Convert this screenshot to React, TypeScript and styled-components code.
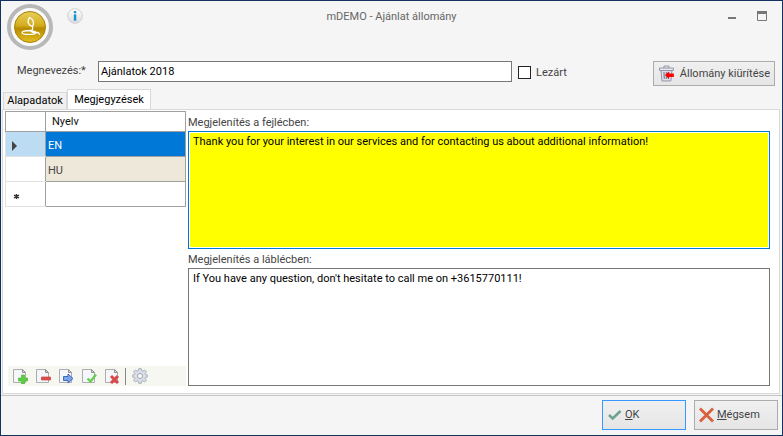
import React, { useState } from "react";
import styled, { createGlobalStyle } from "styled-components";

const GlobalStyle = createGlobalStyle`
  *, *::before, *::after { box-sizing: border-box; }
  body {
    margin: 0;
    background: #f5f5f5;
    color: #444;
    font-family: Roboto, "DejaVu Sans Condensed", sans-serif;
    font-size: 11px;
    line-height: 14px;
  }
  button, input, textarea { font: inherit; color: inherit; }
`;

const Window = styled.main`
  display: flex;
  flex-direction: column;
  min-height: 100vh;
  border: 1px solid #14325f;
`;

const TitleBar = styled.header`
  display: grid;
  grid-template-columns: 1fr auto 1fr;
  padding: 3px 6px 0;
  height: 56px;
`;

const TitleLeft = styled.div`
  display: flex;
  align-items: flex-start;
  gap: 14px;
`;

const Title = styled.h1`
  margin: 5px 0 0;
  font-size: 11px;
  line-height: 16px;
  font-weight: normal;
  color: #666;
`;

const TitleActions = styled.div`
  display: flex;
  justify-content: flex-end;
  align-items: flex-start;
  gap: 19px;
  padding: 7px 8px 0 0;
`;

const IconButton = styled.button`
  display: flex;
  padding: 0;
  border: 0;
  background: none;
`;

const InfoButton = styled(IconButton)`
  margin-top: 4px;
`;

const FieldRow = styled.div`
  display: flex;
  align-items: flex-start;
  padding: 4px 7px 0 16px;
  height: 32px;
`;

const FieldLabel = styled.label`
  flex: none;
  width: 81px;
  padding-top: 3px;
`;

const NameInput = styled.input`
  flex: 0 1 414px;
  min-width: 80px;
  height: 21px;
  padding: 0 2px;
  border: 1px solid #777;
  border-radius: 0;
  background: #fff;
  color: #000;
`;

const CheckLabel = styled.label`
  display: flex;
  align-items: center;
  gap: 5px;
  margin: 4px auto 0 6px;
  height: 15px;
`;

const Checkbox = styled.input`
  appearance: none;
  width: 13px;
  height: 13px;
  margin: 0;
  border: 1px solid #222;
  background: #fff;
  &:checked { box-shadow: inset 0 0 0 2px #fff; background: #222; }
`;

const PushButton = styled.button<{ $primary?: boolean; $width: number; $height: number }>`
  display: flex;
  flex: none;
  align-items: center;
  gap: 3px;
  width: ${(p) => p.$width}px;
  height: ${(p) => p.$height}px;
  padding: 0 4px;
  border: 1px solid ${(p) => (p.$primary ? "#3399ff" : "#acacac")};
  background: linear-gradient(#f0f0f0, #e5e5e5);
  white-space: nowrap;
`;

const EmptyButton = styled(PushButton)`
  gap: 5px;
`;

const Tabs = styled.div`
  display: flex;
  align-items: flex-end;
  height: 20px;
  padding-left: 2px;
`;

const Tab = styled.button<{ $active: boolean }>`
  height: ${(p) => (p.$active ? 20 : 17)}px;
  width: ${(p) => (p.$active ? 84 : 64)}px;
  padding: 0;
  border: 1px solid #d9d9d9;
  border-bottom: 0;
  background: ${(p) => (p.$active ? "#fff" : "#f0f0f0")};
  color: #000;
  white-space: nowrap;
`;

const Panel = styled.section`
  display: flex;
  flex: 1;
  gap: 2px;
  margin: 0 2px 0 1px;
  padding: 1px 9px 7px 2px;
  border: 1px solid #d9d9d9;
  background: #fff;
`;

const LanguagePane = styled.div`
  display: flex;
  flex-direction: column;
  justify-content: space-between;
  width: 181px;
`;

const LanguageTable = styled.table`
  width: 100%;
  border-collapse: collapse;
  table-layout: fixed;
`;

const HeadCell = styled.th<{ $marker?: boolean }>`
  width: ${(p) => (p.$marker ? "40px" : "auto")};
  height: 20px;
  padding: 0 6px;
  border: 1px solid #a0a0a0;
  font-weight: normal;
  text-align: left;
  color: #111;
`;

const LanguageRow = styled.tr<{ $selected: boolean; $tinted: boolean }>`
  height: 25px;
  background: ${(p) => (p.$selected ? "#0078d7" : p.$tinted ? "#eee8da" : "#fff")};
  color: ${(p) => (p.$selected ? "#fff" : "#444")};
`;

const MarkerCell = styled.th<{ $selected: boolean }>`
  padding: 4px 5px 0;
  border: 1px solid #e2e2e2;
  border-right-color: #a0a0a0;
  background: ${(p) => (p.$selected ? "#bcdcf4" : "#fff")};
  text-align: left;
  svg { display: block; }
`;

const NameCell = styled.td`
  padding: 4px 2px 0;
  border: 1px solid #a0a0a0;
`;

const Toolbar = styled.div`
  display: flex;
  align-items: center;
  gap: 7px;
  height: 20px;
  margin-left: 3px;
  padding-left: 4px;
  background: #f7f7f2;
`;

const Separator = styled.span`
  width: 1px;
  height: 17px;
  margin: 0 -1px 0 -2px;
  background: #888;
`;

const Notes = styled.div`
  display: flex;
  flex: 1;
  min-width: 0;
  flex-direction: column;
  padding-top: 1px;
`;

const NoteLabel = styled.label`
  padding: 4px 0 1px;
  height: 19px;
`;

const NoteText = styled.textarea<{ $highlight?: boolean }>`
  flex: 1;
  min-height: 60px;
  margin: 0;
  padding: 3px 4px;
  border: 1px solid ${(p) => (p.$highlight ? "#0078d7" : "#777")};
  border-radius: 0;
  outline: 0;
  resize: none;
  color: #000;
  background: ${(p) => (p.$highlight ? "#ff0" : "#fff")};
  box-shadow: inset 0 0 0 1px #fff;
`;

const Footer = styled.footer`
  display: flex;
  justify-content: flex-end;
  gap: 8px;
  margin-top: 1px;
  padding: 4px 4px 5px;
  border-top: 1px solid #c4c4c4;
`;

const Logo = () => (
  <svg width="46" height="46" viewBox="0 0 46 46" aria-hidden="true">
    <defs>
      <linearGradient id="gold" x1="0" y1="0" x2="0" y2="1">
        <stop offset="0" stopColor="#e8cf5c" />
        <stop offset=".45" stopColor="#d3ad1e" />
        <stop offset=".55" stopColor="#b78c00" />
        <stop offset="1" stopColor="#e4c020" />
      </linearGradient>
    </defs>
    <circle cx="23" cy="23" r="21" fill="#fafafa" stroke="#b8b8b8" strokeWidth="4" />
    <circle cx="23" cy="23" r="15.500" fill="url(#gold)" stroke="#aa8206" />
    <g fill="none" stroke="#fff" strokeWidth="1.300" strokeLinecap="round" strokeLinejoin="round">
      <path d="M25.500 22.500C21.500 21 19.500 18 22.500 13.500c3.500 1.500 5.200 5 3 9" />
      <path d="M25.500 22.500c.5 2.500 0 4-2 4-4.500 0-8.500.5-8.500 2.200 0 2.300 14 2.300 14 0 0-1.200-2.500-1.800-5-1.500 2 2.300 4.500 1.300 6.500 1.300 1 0 1.500.8 2 1.800" />
    </g>
  </svg>
);

const InfoIcon = () => (
  <svg width="16" height="16" viewBox="0 0 16 16" aria-hidden="true">
    <defs>
      <linearGradient id="silver" x1="0" y1="0" x2="0" y2="1">
        <stop offset="0" stopColor="#fff" />
        <stop offset="1" stopColor="#dcdcdc" />
      </linearGradient>
    </defs>
    <circle cx="8" cy="8" r="7.300" fill="url(#silver)" stroke="#d0d0d0" />
    <rect x="6.800" y="3" width="2.500" height="2.200" rx=".6" fill="#1694d2" />
    <rect x="6.800" y="6.300" width="2.500" height="6.500" rx=".6" fill="#1694d2" />
  </svg>
);

const MinimizeIcon = () => (
  <svg width="10" height="10" viewBox="0 0 10 10" aria-hidden="true">
    <path d="M1 6h8v2H1z" fill="#777" />
  </svg>
);

const MaximizeIcon = () => (
  <svg width="12" height="10" viewBox="0 0 12 10" aria-hidden="true">
    <path d="M1 0h10v3H1z" fill="#777" />
    <path d="M1.500.5h9v9h-9z" fill="none" stroke="#777" />
  </svg>
);

const TrashIcon = () => (
  <svg width="17" height="17" viewBox="0 0 17 17" aria-hidden="true">
    <path d="M3 5.500h11l-1 10.500H4z" fill="#dfe2ea" stroke="#9296a5" />
    <path d="M1.500 3h14v2.500h-14z" fill="#e9ebf2" stroke="#9296a5" />
    <path d="M6 3V1h5v2" fill="none" stroke="#9296a5" />
    <path d="M6 7l.4 7M8.500 7v7M11 7l-.4 7" fill="none" stroke="#858999" strokeWidth="1.300" />
    <path d="M7 10l4-3.500v2h5v3.500h-5v2z" fill="#f00" />
  </svg>
);

type Badge = "add" | "remove" | "next" | "accept" | "cancel";

const badges: Record<Badge, React.ReactNode> = {
  add: <path d="M9.500 7h3v3h3v3h-3v3h-3v-3h-3v-3h3z" fill="#5ecb45" stroke="#4fbb3b" strokeWidth=".7" />,
  remove: <path d="M6.500 9h9v3h-9z" fill="#df4a4a" stroke="#c94545" strokeWidth=".7" />,
  next: <path d="M5.500 8.500h4.500V6l5 4.500-5 4.500v-2.500H5.500z" fill="#7aa3ea" stroke="#3f6bbd" />,
  accept: <path d="M6.500 10.500l3 3 5.500-7" fill="none" stroke="#68cc57" strokeWidth="2.400" />,
  cancel: <path d="M7 8l7 7M14 8l-7 7" fill="none" stroke="#d84848" strokeWidth="3" />,
};

const PageIcon = ({ badge }: { badge: Badge }) => (
  <svg width="16" height="16" viewBox="0 0 16 16" aria-hidden="true">
    <path d="M1.500 1.500h9l3 3v10h-12z" fill="#f5f6fc" stroke="#adadad" />
    <path d="M10.500 1.500v3h3z" fill="#ddd" stroke="#929292" />
    {badges[badge]}
  </svg>
);

const GearIcon = () => (
  <svg width="16" height="16" viewBox="0 0 16 16" aria-hidden="true">
    <path
      d="M6.700.7h2.600l.4 2 1.200.5 1.700-1.200 1.800 1.800-1.200 1.700.5 1.200 2 .4v1.800l-2 .4-.5 1.200 1.200 1.700-1.800 1.800-1.700-1.200-1.200.5-.4 2H6.700l-.4-2-1.200-.5-1.700 1.200-1.800-1.800 1.200-1.700-.5-1.200-2-.4V7.100l2-.4.5-1.200-1.200-1.700L3.400 2l1.700 1.200 1.200-.5z"
      fill="#d8dfe9"
      stroke="#a2a8b1"
      strokeWidth=".9"
    />
    <circle cx="8" cy="8" r="2.600" fill="#f8f8f4" stroke="#a2a8b1" />
  </svg>
);

const CheckIcon = () => (
  <svg width="15" height="14" viewBox="0 0 15 14" aria-hidden="true">
    <path d="M2 7l3.700 3.500L13.500 3" fill="none" stroke="#6fa18d" strokeWidth="2.500" />
  </svg>
);

const CrossIcon = () => (
  <svg width="15" height="16" viewBox="0 0 15 16" aria-hidden="true">
    <path d="M1 1.500l13 13M14 1.500l-13 13" fill="none" stroke="#d9603f" strokeWidth="2.800" />
  </svg>
);

const CurrentRowIcon = () => (
  <svg width="8" height="10" viewBox="0 0 8 10" aria-hidden="true">
    <path d="M1 0l5 5-5 5z" fill="#444" />
  </svg>
);

const NewRowIcon = () => (
  <svg width="9" height="7" viewBox="0 0 9 7" aria-hidden="true">
    <path d="M5.500 1v5M3 2.200l5 2.600M8 2.200l-5 2.600" stroke="#333" strokeWidth="1.400" />
  </svg>
);

const tools: { badge: Badge; label: string }[] = [
  { badge: "add", label: "Új" },
  { badge: "remove", label: "Törlés" },
  { badge: "next", label: "Tovább" },
  { badge: "accept", label: "Mentés" },
  { badge: "cancel", label: "Elvetés" },
];

const tabs = ["Alapadatok", "Megjegyzések"];
const languages = ["EN", "HU", ""];

export default function App() {
  const [tab, setTab] = useState("Megjegyzések");
  const [row, setRow] = useState(0);

  return (
    <Window>
      <GlobalStyle />
      <TitleBar>
        <TitleLeft>
          <Logo />
          <InfoButton aria-label="Információ">
            <InfoIcon />
          </InfoButton>
        </TitleLeft>
        <Title>mDEMO - Ajánlat állomány</Title>
        <TitleActions>
          <IconButton aria-label="Kis méret">
            <MinimizeIcon />
          </IconButton>
          <IconButton aria-label="Teljes méret">
            <MaximizeIcon />
          </IconButton>
        </TitleActions>
      </TitleBar>

      <FieldRow>
        <FieldLabel htmlFor="name">Megnevezés:*</FieldLabel>
        <NameInput id="name" defaultValue="Ajánlatok 2018" />
        <CheckLabel>
          <Checkbox type="checkbox" />
          Lezárt
        </CheckLabel>
        <EmptyButton $width={122} $height={25}>
          <TrashIcon />
          Állomány kiürítése
        </EmptyButton>
      </FieldRow>

      <Tabs role="tablist">
        {tabs.map((name) => (
          <Tab key={name} role="tab" aria-selected={tab === name} $active={tab === name} onClick={() => setTab(name)}>
            {name}
          </Tab>
        ))}
      </Tabs>

      <Panel role="tabpanel" aria-label={tab}>
        <LanguagePane>
          <LanguageTable>
            <thead>
              <tr>
                <HeadCell $marker />
                <HeadCell>Nyelv</HeadCell>
              </tr>
            </thead>
            <tbody>
              {languages.map((code, i) => (
                <LanguageRow key={i} $selected={row === i} $tinted={i % 2 === 1} onClick={() => setRow(i)}>
                  <MarkerCell $selected={row === i}>
                    {row === i ? <CurrentRowIcon /> : code === "" && <NewRowIcon />}
                  </MarkerCell>
                  <NameCell>{code}</NameCell>
                </LanguageRow>
              ))}
            </tbody>
          </LanguageTable>
          <Toolbar role="toolbar">
            {tools.map(({ badge, label }) => (
              <IconButton key={badge} aria-label={label}>
                <PageIcon badge={badge} />
              </IconButton>
            ))}
            <Separator />
            <IconButton aria-label="Beállítások">
              <GearIcon />
            </IconButton>
          </Toolbar>
        </LanguagePane>

        <Notes>
          <NoteLabel htmlFor="header-note">Megjelenítés a fejlécben:</NoteLabel>
          <NoteText
            id="header-note"
            $highlight
            spellCheck={false}
            defaultValue="Thank you for your interest in our services and for contacting us about additional information!"
          />
          <NoteLabel htmlFor="footer-note">Megjelenítés a láblécben:</NoteLabel>
          <NoteText
            id="footer-note"
            spellCheck={false}
            defaultValue="If You have any question, don't hesitate to call me on +3615770111!"
          />
        </Notes>
      </Panel>

      <Footer>
        <PushButton $primary $width={84} $height={30}>
          <CheckIcon />
          <span>
            <u>O</u>K
          </span>
        </PushButton>
        <PushButton $width={84} $height={30}>
          <CrossIcon />
          <span>
            <u>M</u>égsem
          </span>
        </PushButton>
      </Footer>
    </Window>
  );
}
